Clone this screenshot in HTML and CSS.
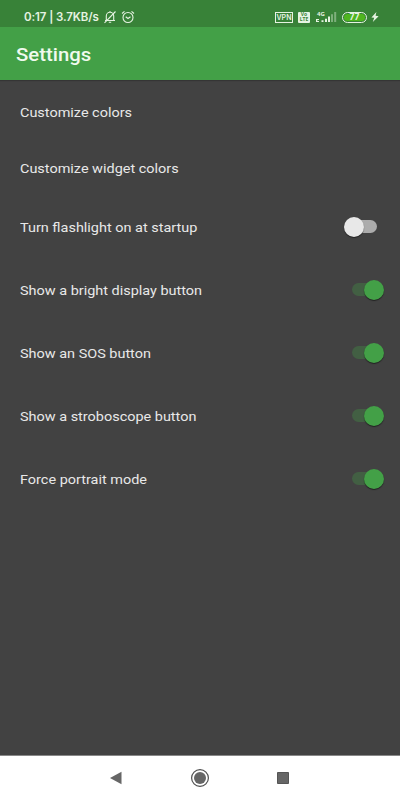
FILE: index.html
```html
<!DOCTYPE html>
<html lang="en">
<head>
<meta charset="utf-8">
<title>Settings</title>
<link rel="stylesheet" href="styles.css">
</head>
<body>
<div class="screen">
  <div class="status">
    <span class="clock">0:17 | 3.7KB/s</span>
    <svg class="bell" width="14" height="14" viewBox="0 0 14 14" fill="none" stroke="currentColor" stroke-width="1.1"><path d="M2 10.5h10M3.3 10.2V6a3.7 3.7 0 0 1 7.4 0v4.2M7 1v1.3M5.8 12.3h2.4M1.5 12.8L12.5 1.5"/></svg>
    <svg class="alarm" width="14" height="14" viewBox="0 0 14 14" fill="none" stroke="currentColor" stroke-width="1.1"><circle cx="7" cy="7.5" r="5"/><path d="M1 3.5L3.5 1.3M13 3.5L10.5 1.3M4.7 6.7L7 8.5l2.5-1.8"/></svg>
    <span class="vpn">VPN</span>
    <span class="volte"><span>Vo</span><span>LTE</span></span>
    <svg class="signal" width="21" height="12" viewBox="0 0 21 12" fill="currentColor"><text x="1" y="5" class="net">4G</text><path d="M0 8h3v1H1.3v1H3v1H0zM5.5 9.3h2V11h-2zM9 7.7h2V11H9zM12 5.5h2V11h-2z"/><path opacity=".4" d="M15 3.3h2V11h-2zM18.2 1h2v10h-2z"/></svg>
    <span class="battery"><span class="level">77</span></span>
    <svg class="bolt" width="8" height="10" viewBox="0 0 8 10" fill="currentColor"><path d="M5.4 0L.4 5.4l2.8.4L1.8 10 7.6 4.2l-3-.4z"/></svg>
  </div>
  <header class="bar"><h1>Settings</h1></header>
  <main class="list">
    <div class="row"><span class="label">Customize colors</span></div>
    <div class="row"><span class="label">Customize widget colors</span></div>
    <div class="toggles">
      <div class="row tall"><span class="label">Turn flashlight on at startup</span><i class="switch"></i></div>
      <div class="row tall"><span class="label">Show a bright display button</span><i class="switch on"></i></div>
      <div class="row tall"><span class="label">Show an SOS button</span><i class="switch on"></i></div>
      <div class="row tall"><span class="label">Show a stroboscope button</span><i class="switch on"></i></div>
      <div class="row tall"><span class="label">Force portrait mode</span><i class="switch on"></i></div>
    </div>
  </main>
  <nav class="nav">
    <svg width="12" height="14" viewBox="0 0 12 14"><path d="M0 7L11.5 .7v12.6z" fill="#666"/></svg>
    <svg width="20" height="20" viewBox="0 0 20 20"><circle cx="10" cy="10" r="8.4" fill="none" stroke="#505050" stroke-width="1.2"/><circle cx="10" cy="10" r="6" fill="#666"/></svg>
    <svg width="12" height="12" viewBox="0 0 12 12"><path d="M.5 .5h11v11H.5z" fill="#666" stroke="#555"/></svg>
  </nav>
</div>
</body>
</html>
```
FILE: styles.css
```css
* { box-sizing: border-box; }
body { margin: 0; font-family: Roboto, sans-serif; }
.screen { width: 400px; height: 800px; display: flex; flex-direction: column; background: #424242; overflow: hidden; }
.status { height: 27px; padding: 7px 21px 0 24px; display: flex; align-items: center; background: #388238; color: #e6f3e2; flex: none; }
.clock { width: 79px; font: 600 11.5px/20px Inter, sans-serif; letter-spacing: -0.1px; white-space: nowrap; }
.alarm { margin-left: 4px; }
.vpn { margin-left: auto; width: 18px; height: 11px; border: 1px solid currentColor; font: 600 7px/9px Inter, sans-serif; text-align: center; }
.volte { margin-left: 5px; width: 12px; height: 11px; border-radius: 1px; background: #e6f3e2; color: #388238; font: 700 5px/5px "Noto Sans", sans-serif; display: flex; flex-direction: column; align-items: center; justify-content: center; }
.signal { margin-left: 6px; }
.net { font: 700 6px "Noto Sans", sans-serif; }
.battery { margin-left: 5px; width: 25px; height: 11px; padding: 1px; border: 1px solid currentColor; border-radius: 6px; }
.level { display: block; height: 7px; border-radius: 4px; background: #4fb51f; font: 700 8.5px/7px Inter, sans-serif; text-align: center; }
.bolt { margin-left: 4px; }
.bar { height: 53px; flex: none; padding-left: 16px; display: flex; align-items: center; background: #43a047; color: #f0faee; box-shadow: 0 1px 1px #353535; }
h1 { margin: 0; font-size: 19.2px; line-height: 24px; font-weight: 500; padding-top: 2px; transform: scaleX(1.06); transform-origin: left; }
.list { flex: 1; padding-top: 4px; }
.toggles { margin-top: -1px; }
.row { height: 56px; padding: 0 16px 0 20px; display: flex; align-items: center; justify-content: space-between; font-size: 13.5px; color: #e8e8e8; }
.label { transform: scaleX(1.07); transform-origin: left; }
.tall { height: 63px; }
.switch { position: relative; width: 40px; height: 20px; display: block; }
.switch::before { content: ""; position: absolute; left: 8px; top: 3px; width: 25px; height: 13px; border-radius: 7px; background: #acacac; }
.switch::after { content: ""; position: absolute; left: 0; top: 0; width: 20px; height: 20px; border-radius: 50%; background: #e8e8e8; box-shadow: 0 1px 1px rgba(0, 0, 0, .5); }
.on::before { background: #425f43; }
.on::after { left: 20px; background: #43a047; }
.nav { height: 45px; flex: none; padding: 0 111px 0 110px; display: flex; align-items: center; justify-content: space-between; background: #fff; border-top: 1px solid #888; }
```
